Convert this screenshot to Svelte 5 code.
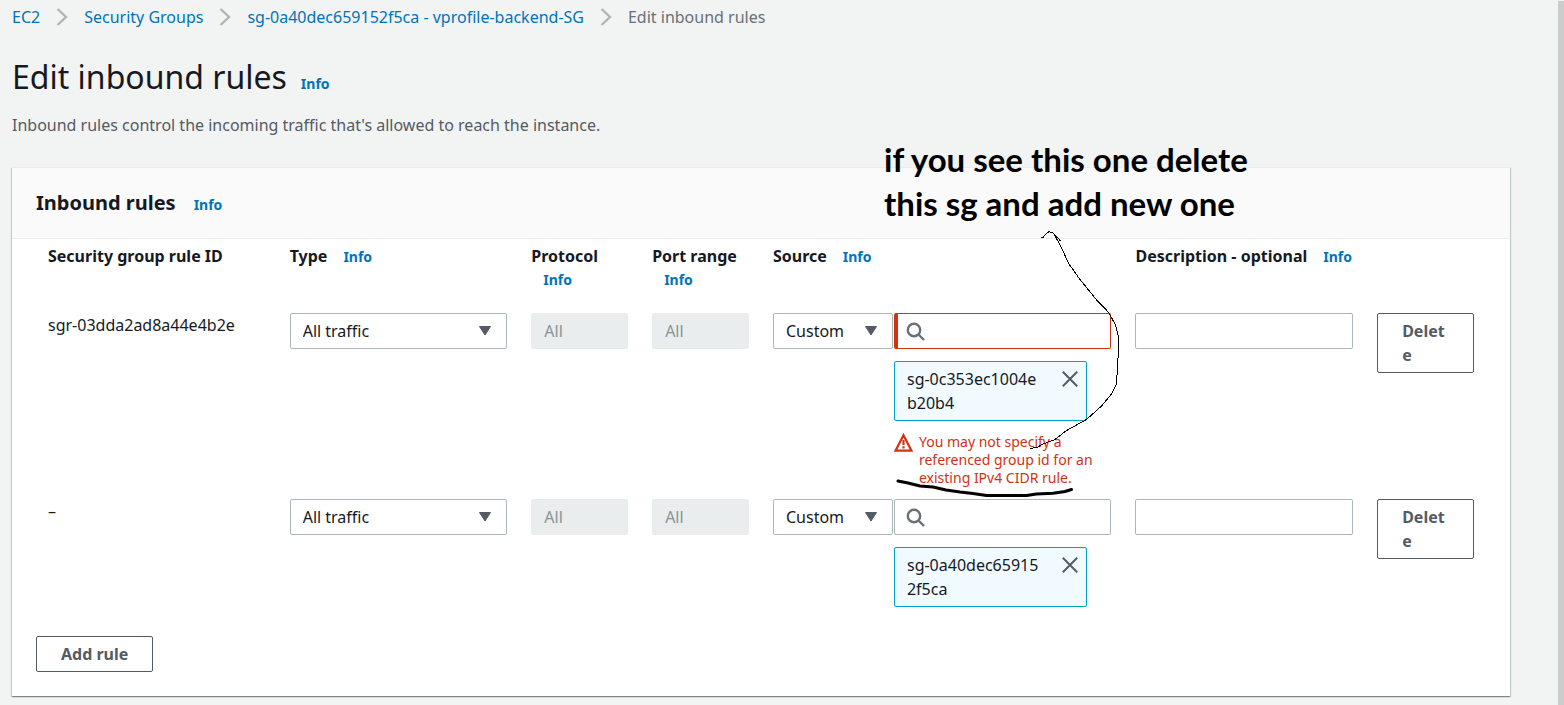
<script>
  const crumbs = ['EC2', 'Security Groups', 'sg-0a40dec659152f5ca - vprofile-backend-SG'];
  const columns = [
    { title: 'Security group rule ID', info: false },
    { title: 'Type', info: true },
    { title: 'Protocol', info: true, stacked: true },
    { title: 'Port range', info: true, stacked: true },
    { title: 'Source', info: true },
    { title: 'Description - optional', info: true },
    { title: '', info: false }
  ];
  let rules = $state([
    {
      id: 'sgr-03dda2ad8a44e4b2e',
      group: 'sg-0c353ec1004eb20b4',
      error: 'You may not specify a referenced group id for an existing IPv4 CIDR rule.'
    },
    { id: '–', group: 'sg-0a40dec659152f5ca', error: '' }
  ]);
</script>

{#snippet caret()}
  <svg class="caret" width="14" height="12" viewBox="0 0 14 12" aria-hidden="true">
    <path d="M1.500 1.500h11L7 10z" fill="#545b64" stroke="#545b64" stroke-width="1" stroke-linejoin="round" />
  </svg>
{/snippet}

<main>
  <nav aria-label="Breadcrumbs">
    {#each crumbs as crumb}
      <a href="#top">{crumb}</a>
      <svg width="12" height="18" viewBox="0 0 12 18" aria-hidden="true">
        <path d="M1.500 1l8.500 8-8.500 8" fill="none" stroke="#aab7b8" stroke-width="2.400" />
      </svg>
    {/each}
    <span>Edit inbound rules</span>
  </nav>

  <header class="title">
    <h1>Edit inbound rules</h1>
    <a class="info" href="#info">Info</a>
  </header>
  <p class="lead">Inbound rules control the incoming traffic that's allowed to reach the instance.</p>

  <section class="card">
    <header class="card-head">
      <h2>Inbound rules</h2>
      <a class="info" href="#info">Info</a>
    </header>
    <div class="card-body">
      <table>
        <colgroup>
          <col class="two" /><col class="two" /><col class="one" /><col class="one" />
          <col class="three" /><col class="two" /><col class="one" />
        </colgroup>
        <thead>
          <tr>
            {#each columns as column}
              <th scope="col">
                <div class="head" class:stacked={column.stacked}>
                  <span>{column.title}</span>
                  {#if column.info}<a class="info" href="#info">Info</a>{/if}
                </div>
              </th>
            {/each}
          </tr>
        </thead>
        <tbody>
          {#each rules as rule}
            <tr>
              <td>{rule.id}</td>
              <td>
                <div class="select">
                  <select aria-label="Type"><option>All traffic</option></select>
                  {@render caret()}
                </div>
              </td>
              <td><input aria-label="Protocol" value="All" disabled /></td>
              <td><input aria-label="Port range" value="All" disabled /></td>
              <td>
                <div class="source">
                  <div class="select">
                    <select aria-label="Source type"><option>Custom</option></select>
                    {@render caret()}
                  </div>
                  <div class="lookup">
                    <div class="search">
                      <input type="text" aria-label="Source" class:invalid={rule.error} />
                      <svg width="20" height="20" viewBox="0 0 20 20" aria-hidden="true">
                        <circle cx="8" cy="8" r="6.200" fill="none" stroke="#687078" stroke-width="2.400" />
                        <path d="M12.500 12.500l5.500 5.500" stroke="#687078" stroke-width="2.400" />
                      </svg>
                    </div>
                    <div class="token">
                      <span>{rule.group}</span>
                      <button type="button" aria-label="Remove {rule.group}">
                        <svg width="16" height="16" viewBox="0 0 16 16" aria-hidden="true">
                          <path d="M.8.8l14.400 14.400M15.200.8L.8 15.200" stroke="#545b64" stroke-width="2" />
                        </svg>
                      </button>
                    </div>
                    {#if rule.error}
                      <div class="error">
                        <svg width="19" height="19" viewBox="0 0 19 19" aria-hidden="true">
                          <path d="M9.500 2.200L17.500 17.700h-16z" fill="none" stroke="#d13212" stroke-width="2.200" />
                          <path d="M9.500 7v5M9.500 13.300v2.200" stroke="#d13212" stroke-width="2.200" />
                        </svg>
                        <span>{rule.error}</span>
                      </div>
                    {/if}
                  </div>
                </div>
              </td>
              <td><input type="text" aria-label="Description" /></td>
              <td><button type="button" class="button delete">Delete</button></td>
            </tr>
          {/each}
        </tbody>
      </table>
      <button type="button" class="button">Add rule</button>
    </div>
  </section>

  <div class="scrollbar"></div>

  <p class="note">if you see this one delete<br />this sg and add new one</p>
  <svg class="ink" width="260" height="280" viewBox="880 225 260 280" aria-hidden="true">
    <path
      d="M1040.500 237.500H1043L1046 234L1048.700 231.700L1053 233L1057 237L1060.500 241M1054.500 234.500L1062.700 250.500L1068.700 263.500L1080 279.500L1096.700 300L1108.700 312.500L1115.500 325L1118.500 336.500L1118.300 353L1116.500 384L1111.500 394L1101.500 406L1086.500 419.500L1066.500 430.500L1055 439.500L1043 444L1038 447L1030.500 448.500"
      fill="none" stroke="#000" stroke-width="1" shape-rendering="crispEdges" />
    <path
      d="M898 481L908 483L920 486L933 487L946 490L960 492L973 493.500L986.500 495.500H1026.500L1036.500 494L1053 493.300L1065 491.500L1071.500 489.500"
      fill="none" stroke="#000" stroke-width="3" stroke-linecap="round" stroke-linejoin="round" />
  </svg>
</main>

<style>
  :global(body) {
    margin: 0;
    background: #f2f3f3;
  }
  main {
    position: relative;
    min-height: 100vh;
    box-sizing: border-box;
    padding: 5px 54px 8px 12px;
    overflow: hidden;
    font: 16px/24px 'Noto Sans', sans-serif;
    color: #16191f;
  }
  a {
    color: #0073bb;
    text-decoration: none;
  }
  nav {
    display: flex;
    align-items: center;
    gap: 16px;
    color: #687078;
  }
  h1, h2, p {
    margin: 0;
  }
  .title, .card-head {
    display: flex;
    align-items: baseline;
  }
  .title {
    gap: 14px;
    margin-top: 24px;
  }
  h1 {
    font-size: 32px;
    line-height: 48px;
    font-weight: 400;
  }
  .info {
    font-size: 14px;
    font-weight: 700;
  }
  .lead {
    margin-top: 12px;
    color: #545b64;
  }
  .card {
    margin-top: 30px;
    background: #fff;
    border-top: 1px solid #eaeded;
    box-shadow: 0 1px 1px 0 rgba(0, 28, 36, 0.3), 1px 1px 1px 0 rgba(0, 28, 36, 0.15), -1px 1px 1px 0 rgba(0, 28, 36, 0.15);
  }
  .card-head {
    gap: 18px;
    padding: 20px 24px;
    background: #fafafa;
    border-bottom: 1px solid #eaeded;
  }
  h2 {
    font-size: 20px;
    line-height: 30px;
    font-weight: 700;
  }
  .card-body {
    padding: 0 24px 24px;
  }
  table {
    width: 100%;
    table-layout: fixed;
    border-collapse: collapse;
  }
  .one { width: 8.333%; }
  .two { width: 16.667%; }
  .three { width: 25%; }
  th {
    padding: 5px 12px 9px;
    text-align: left;
    vertical-align: top;
    font-weight: 700;
    white-space: nowrap;
  }
  .head {
    display: flex;
    gap: 16px;
    align-items: baseline;
  }
  .stacked {
    display: block;
  }
  .stacked .info {
    display: block;
    margin-left: 12px;
  }
  td {
    padding: 12px 12px 0;
    vertical-align: top;
  }
  input, select {
    display: block;
    width: 100%;
    height: 36px;
    box-sizing: border-box;
    padding: 0 12px;
    border: 1px solid #aab7b8;
    border-radius: 2px;
    background: #fff;
    color: #16191f;
    font: inherit;
    appearance: none;
  }
  input:disabled {
    border-color: #eaeded;
    background: #eaeded;
    color: #879596;
  }
  .select, .search {
    position: relative;
  }
  .caret {
    position: absolute;
    top: 12px;
    right: 15px;
    pointer-events: none;
  }
  .source {
    display: grid;
    grid-template-columns: 120px minmax(0, 1fr);
    gap: 1px;
    align-items: start;
  }
  .search input {
    padding-left: 42px;
  }
  .search svg {
    position: absolute;
    top: 9px;
    left: 12px;
  }
  .search .invalid {
    border-color: #d13212;
    border-left-width: 4px;
  }
  .token {
    display: flex;
    align-items: flex-start;
    justify-content: space-between;
    gap: 20px;
    margin: 12px 24px 0 0;
    padding: 5px 8px 5px 12px;
    border: 1px solid #00a1c9;
    border-radius: 2px;
    background: #f1faff;
  }
  .token span {
    word-break: break-all;
  }
  .token button {
    flex: none;
    margin-top: 4px;
    padding: 0;
    border: 0;
    background: none;
    line-height: 0;
  }
  .error {
    display: flex;
    gap: 6px;
    margin: 12px 16px 0 0;
    color: #d13212;
    font-size: 14px;
    line-height: 18px;
  }
  .error svg {
    flex: none;
  }
  .button {
    padding: 5px 24px;
    border: 1px solid #545b64;
    border-radius: 2px;
    background: #fff;
    color: #545b64;
    font: inherit;
    font-weight: 700;
  }
  .card-body > .button {
    margin-top: 29px;
  }
  .delete {
    width: 100%;
    word-break: break-all;
    text-align: left;
  }
  .scrollbar {
    position: absolute;
    top: 1px;
    right: 0;
    bottom: 0;
    width: 6px;
    background: #ccc;
  }
  .note {
    position: absolute;
    top: 137px;
    left: 884px;
    color: #000;
    font: 700 33px/44px Lato, sans-serif;
    white-space: nowrap;
  }
  .ink {
    position: absolute;
    top: 225px;
    left: 880px;
    pointer-events: none;
  }
</style>
